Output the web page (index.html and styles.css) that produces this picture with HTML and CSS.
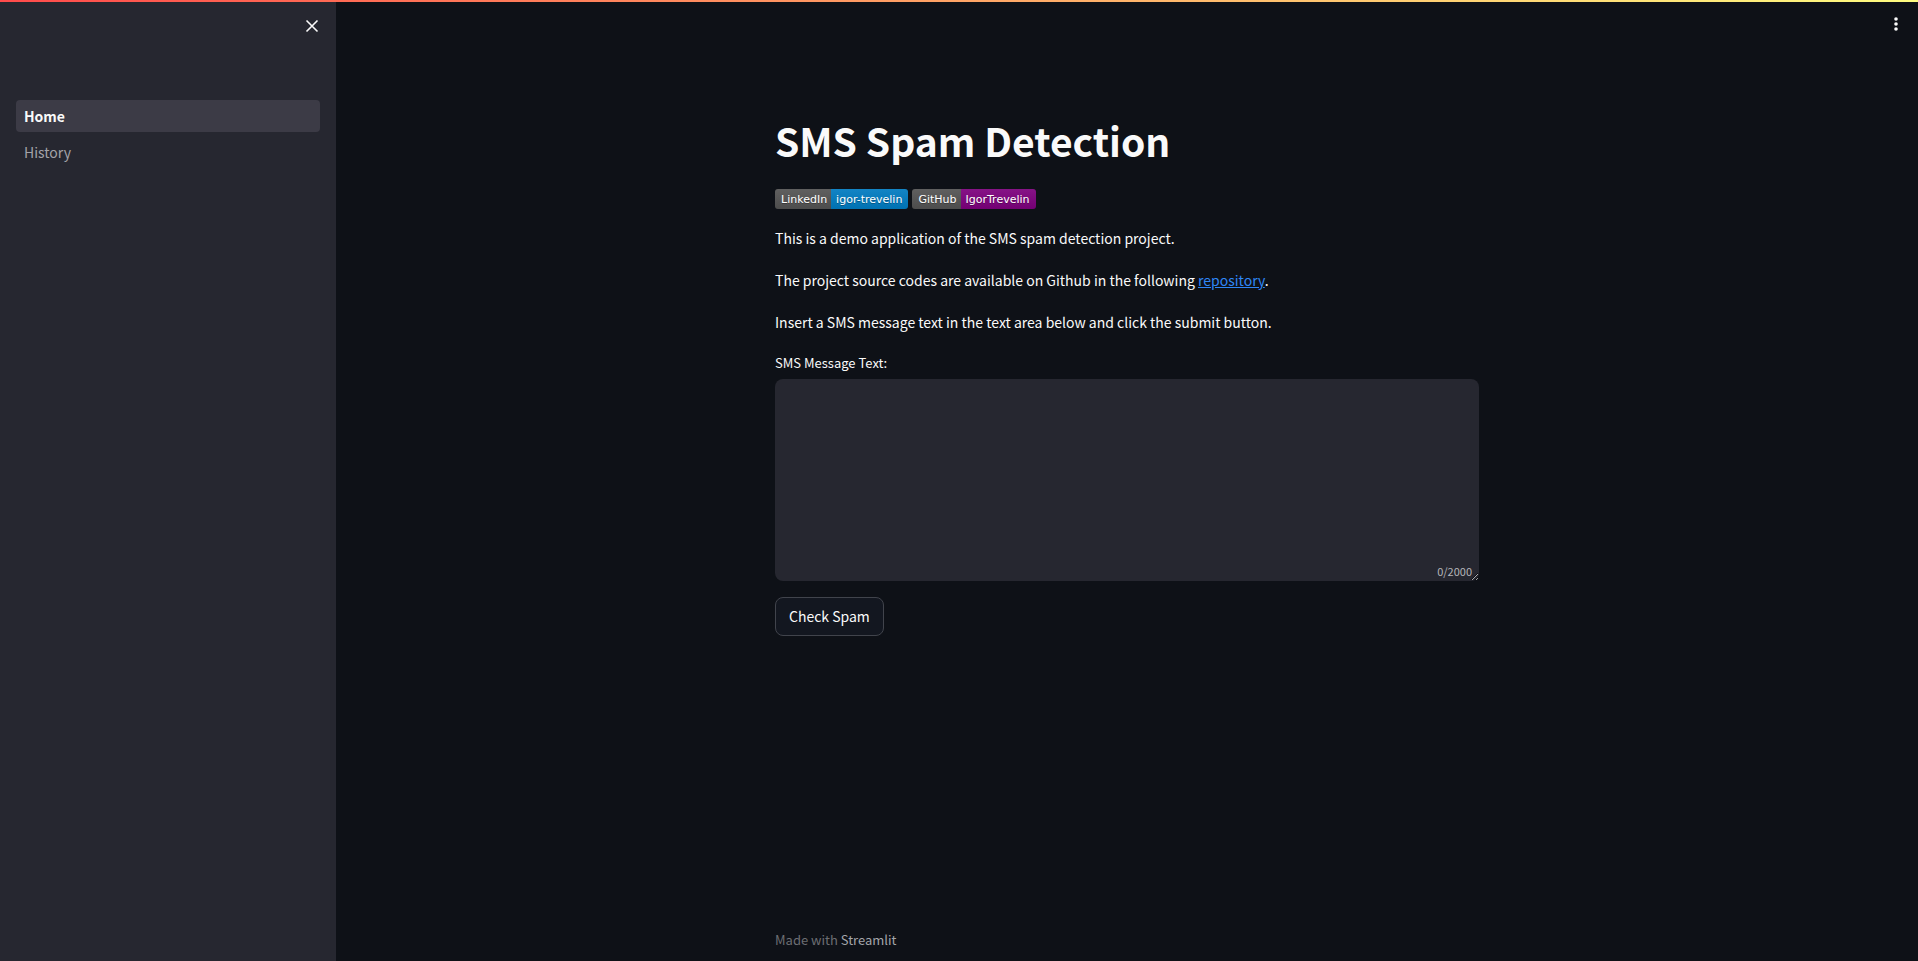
FILE: index.html
```html
<!DOCTYPE html>
<html lang="en">
<head>
<meta charset="utf-8">
<title>SMS Spam Detection</title>
<link rel="stylesheet" href="styles.css">
</head>
<body>
<div class="decoration"></div>
<div class="app">
  <aside class="sidebar">
    <div class="sidebar-header">
      <button class="icon-button" type="button" aria-label="Close sidebar">
        <svg width="20" height="20" viewBox="0 0 20 20" fill="none" stroke="currentColor" stroke-width="1.6"><path d="M4.5 4.5 15.5 15.5M15.5 4.5 4.5 15.5"/></svg>
      </button>
    </div>
    <nav class="nav">
      <a class="nav-link nav-link-active" href="#">Home</a>
      <a class="nav-link" href="#">History</a>
    </nav>
  </aside>
  <div class="main">
    <header class="toolbar">
      <button class="icon-button" type="button" aria-label="Main menu">
        <svg width="20" height="20" viewBox="0 0 20 20" fill="currentColor"><circle cx="10" cy="5" r="1.8"/><circle cx="10" cy="10" r="1.8"/><circle cx="10" cy="15" r="1.8"/></svg>
      </button>
    </header>
    <main class="content">
      <h1 class="title">SMS Spam Detection</h1>
      <div class="badges">
        <a class="badge" href="#"><span class="badge-label">LinkedIn</span><span class="badge-value badge-blue">igor-trevelin</span></a>
        <a class="badge" href="#"><span class="badge-label">GitHub</span><span class="badge-value badge-purple">IgorTrevelin</span></a>
      </div>
      <p class="text">This is a demo application of the SMS spam detection project.</p>
      <p class="text">The project source codes are available on Github in the following <a class="link" href="#">repository</a>.</p>
      <p class="text">Insert a SMS message text in the text area below and click the submit button.</p>
      <form class="form">
        <label class="label" for="message">SMS Message Text:</label>
        <div class="field">
          <textarea class="textarea" id="message" maxlength="2000"></textarea>
          <span class="counter">0/2000</span>
        </div>
        <button class="submit" type="button">Check Spam</button>
      </form>
    </main>
    <footer class="footer">Made with <a class="footer-link" href="#">Streamlit</a></footer>
  </div>
</div>
</body>
</html>
```
FILE: styles.css
```css
* { box-sizing: border-box; }

body {
  margin: 0;
  background: #0e1117;
  color: #fafafa;
  font-family: "Source Sans Pro", "Noto Sans CJK JP", sans-serif;
  font-size: 14px;
  line-height: 26px;
}

.decoration {
  position: absolute;
  top: 0;
  left: 0;
  right: 0;
  height: 2px;
  background: linear-gradient(90deg, #ff4b4b, #fffd80);
}

.app {
  display: flex;
  min-height: 100vh;
}

.sidebar {
  flex: none;
  width: 336px;
  background: #262730;
}

.sidebar-header {
  display: flex;
  justify-content: flex-end;
  height: 100px;
  padding: 16px 14px;
}

.icon-button {
  display: flex;
  width: 20px;
  height: 20px;
  padding: 0;
  border: 0;
  background: none;
  color: inherit;
}

.nav {
  display: flex;
  flex-direction: column;
  gap: 4px;
  padding: 0 16px;
}

.nav-link {
  padding: 0 8px;
  border-radius: 4px;
  color: #a3a3a8;
  line-height: 32px;
  text-decoration: none;
}

.nav-link-active {
  background: #3c3b46;
  color: #fafafa;
  font-weight: 700;
}

.main {
  flex: 1;
  display: flex;
  flex-direction: column;
  align-items: center;
}

.toolbar {
  align-self: stretch;
  display: flex;
  justify-content: flex-end;
  height: 96px;
  padding: 14px 12px;
}

.content {
  flex: 1;
  width: 100%;
  max-width: 704px;
}

.title {
  margin: 0;
  padding: 18px 0;
  font-size: 39px;
  font-weight: 700;
  line-height: 53px;
}

.badges {
  display: flex;
  gap: 4px;
  margin: 4px 0 16px;
}

.badge {
  display: flex;
  height: 20px;
  border-radius: 3px;
  overflow: hidden;
  color: #fff;
  font-family: "DejaVu Sans", sans-serif;
  font-size: 11px;
  line-height: 21px;
  text-decoration: none;
  text-shadow: 0 1px 0 rgba(1, 1, 1, 0.3);
}

.badge-label,
.badge-value {
  background-image: linear-gradient(rgba(187, 187, 187, 0.1), rgba(0, 0, 0, 0.1));
}

.badge-label { padding: 0 4px 0 6px; background-color: #555; }
.badge-value { padding: 0 6px 0 5px; }
.badge-blue { background-color: #007ec6; }
.badge-purple { background-color: #800080; }

.text { margin: 0 0 16px; }

.link { color: #2f86f6; }

.form {
  display: flex;
  flex-direction: column;
  align-items: flex-start;
}

.label {
  margin-bottom: 4px;
  font-size: 13px;
  line-height: 24px;
}

.field {
  position: relative;
  width: 100%;
}

.textarea {
  display: block;
  width: 100%;
  height: 202px;
  padding: 16px;
  border: 0;
  border-radius: 8px;
  background: #262730;
  color: inherit;
  font: inherit;
}

.counter {
  position: absolute;
  right: 7px;
  bottom: 0;
  color: #b4b5b9;
  font-size: 11px;
  line-height: 20px;
}

.submit {
  margin-top: 16px;
  padding: 6px 13px;
  border: 1px solid #41444c;
  border-radius: 8px;
  background: #131720;
  color: inherit;
  font: inherit;
  line-height: 25px;
}

.footer {
  width: 100%;
  max-width: 704px;
  padding-bottom: 10px;
  color: #6c6e73;
  font-size: 13px;
  line-height: 22px;
}

.footer-link {
  color: #a3a5aa;
  text-decoration: none;
}
```
